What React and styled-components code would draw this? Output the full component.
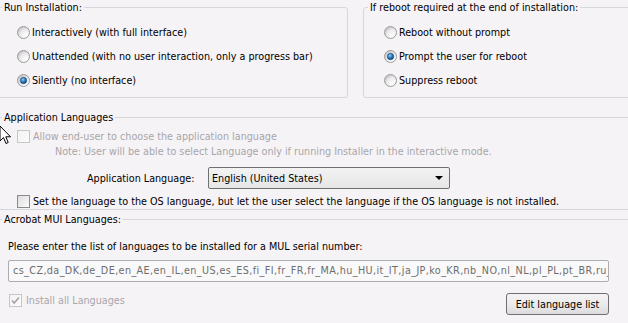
import React from 'react';
import styled, { createGlobalStyle } from 'styled-components';

const GlobalStyle = createGlobalStyle`
  html, body {
    margin: 0;
    padding: 0;
    background: #f6f3f6;
  }
`;

const Page = styled.div`
  position: relative;
  width: 628px;
  height: 323px;
  overflow: hidden;
  box-sizing: border-box;
  padding-top: 1px;
  background: #f6f3f6;
  font-family: "DejaVu Sans Condensed", "DejaVu Sans", sans-serif;
  font-stretch: condensed;
  font-size: 10.7px;
  color: #000;
`;

const TopRow = styled.div`
  display: flex;
  gap: 15px;
  margin-left: -2px;
`;

const Group = styled.fieldset`
  flex: none;
  box-sizing: border-box;
  width: ${(p) => p.$width}px;
  min-width: 0;
  margin: ${(p) => p.$margin || '0'};
  padding: ${(p) => p.$pad || '0'};
  border: 1px solid #d4d8dc;
  border-radius: 3px;
`;

const Legend = styled.legend`
  margin-left: ${(p) => p.$offset}px;
  padding: 0 2px;
  line-height: 13px;
`;

const RadioList = styled.div`
  display: flex;
  flex-direction: column;
  gap: 8px;
  padding: 10px 0 9px ${(p) => p.$indent}px;
`;

const Choice = styled.label`
  display: flex;
  align-items: center;
  gap: ${(p) => p.$gap || 2}px;
  height: ${(p) => p.$h || 16}px;
  color: ${(p) => (p.$disabled ? '#a7a6aa' : '#000')};
  padding-left: ${(p) => p.$indent || 0}px;
  margin-top: ${(p) => p.$top || 0}px;
  white-space: nowrap;
`;

const Note = styled.div`
  margin-top: 2px;
  padding-left: 56px;
  line-height: 13px;
  color: #a7a6aa;
  white-space: nowrap;
`;

const LangRow = styled.div`
  display: flex;
  align-items: center;
  margin-top: 9px;
  padding-left: 88px;
`;

const LangLabel = styled.span`
  width: 121px;
  flex: none;
`;

const Combo = styled.div`
  box-sizing: border-box;
  display: flex;
  align-items: center;
  justify-content: space-between;
  width: 242px;
  height: 22px;
  padding: 0 6px 0 3px;
  border: 1px solid #707070;
  border-radius: 2px;
  background: linear-gradient(#f3f3f3, #e6e6e6);
`;

const Arrow = styled.span`
  width: 0;
  height: 0;
  border-left: 4px solid transparent;
  border-right: 4px solid transparent;
  border-top: 4px solid #000;
`;

const MuiBody = styled.div`
  width: 601px;
  padding: 14px 0 20px 9px;
`;

const Prompt = styled.div`
  line-height: 13px;
  white-space: nowrap;
`;

const ListField = styled.div`
  box-sizing: border-box;
  width: 601px;
  height: 22px;
  margin-top: 7px;
  padding: 0 4px;
  border: 1px solid #abadb3;
  border-radius: 2px;
  background: #faf9fa;
  color: #6d6d6d;
  line-height: 20px;
  letter-spacing: 0.4px;
  white-space: nowrap;
  overflow: hidden;
`;

const BottomRow = styled.div`
  display: flex;
  justify-content: space-between;
  align-items: flex-start;
  margin-top: 11px;
`;

const Button = styled.button`
  box-sizing: border-box;
  width: 103px;
  height: 22px;
  padding: 0;
  border: 1px solid #707070;
  border-radius: 3px;
  background: linear-gradient(#f4f4f4 0%, #ebebeb 50%, #dcdcdc 100%);
  font: inherit;
  color: #000;
`;

const Cursor = styled.svg`
  position: absolute;
  left: -1px;
  top: 125px;
`;

function RadioMark({ checked }) {
  return (
    <svg width="13" height="13" viewBox="0 0 13 13">
      <defs>
        <radialGradient id="rFill" cx="0.7" cy="0.75" r="0.8">
          <stop offset="0" stopColor="#ffffff" />
          <stop offset="0.6" stopColor="#ebebeb" />
          <stop offset="1" stopColor="#c4c4c4" />
        </radialGradient>
        <radialGradient id="rDot" cx="0.4" cy="0.35" r="0.7">
          <stop offset="0" stopColor="#8fd0f5" />
          <stop offset="0.5" stopColor="#2b7dc0" />
          <stop offset="1" stopColor="#0d3f78" />
        </radialGradient>
      </defs>
      <circle cx="6.5" cy="6.5" r="6" fill="url(#rFill)" stroke="#9c9c9c" />
      {checked && <circle cx="6.5" cy="6.5" r="3.2" fill="url(#rDot)" stroke="#17406e" strokeWidth="0.6" />}
    </svg>
  );
}

function CheckMark({ checked, disabled }) {
  const edge = disabled ? '#c6c6c6' : '#8a8a8a';
  return (
    <svg width="13" height="13" viewBox="0 0 13 13">
      <defs>
        <linearGradient id={disabled ? 'cOff' : 'cOn'} x1="0" y1="0" x2="1" y2="1">
          <stop offset="0" stopColor={disabled ? '#f2f2f2' : '#dcdcdc'} />
          <stop offset="1" stopColor="#fcfcfc" />
        </linearGradient>
      </defs>
      <rect x="0.5" y="0.5" width="12" height="12" fill={`url(#${disabled ? 'cOff' : 'cOn'})`} stroke={edge} />
      {checked && (
        <path d="M3 6.5 L5.2 9 L10 3.5" fill="none" stroke="#a3a3a3" strokeWidth="1.6" />
      )}
    </svg>
  );
}

// the field is narrower than the list, so it shows only the start of it
const langList =
  'cs_CZ,da_DK,de_DE,en_AE,en_IL,en_US,es_ES,fi_FI,fr_FR,fr_MA,hu_HU,it_IT,ja_JP,ko_KR,nb_NO,nl_NL,pl_PL,pt_BR,ru_RU,sv_SE,tr_TR,uk_UA,zh_CN,zh_TW';

export default function App() {
  return (
    <>
      <GlobalStyle />
      <Page>
        <TopRow>
          <Group $width={350}>
            <Legend $offset={3}>Run Installation:</Legend>
            <RadioList $indent={18}>
              <Choice><RadioMark />Interactively (with full interface)</Choice>
              <Choice><RadioMark />Unattended (with no user interaction, only a progress bar)</Choice>
              <Choice><RadioMark checked />Silently (no interface)</Choice>
            </RadioList>
          </Group>
          <Group $width={300}>
            <Legend $offset={4}>If reboot required at the end of installation:</Legend>
            <RadioList $indent={20}>
              <Choice><RadioMark />Reboot without prompt</Choice>
              <Choice><RadioMark checked />Prompt the user for reboot</Choice>
              <Choice><RadioMark />Suppress reboot</Choice>
            </RadioList>
          </Group>
        </TopRow>

        <Group $width={660} $margin="13px 0 0 -2px" $pad="0 0 1px 0">
          <Legend $offset={3}>Application Languages</Legend>
          <Choice $disabled $indent={18} $top={6} $gap={3} $h={13}>
            <CheckMark disabled />Allow end-user to choose the application language
          </Choice>
          <Note>Note: User will be able to select Language only if running Installer in the interactive mode.</Note>
          <LangRow>
            <LangLabel>Application Language:</LangLabel>
            <Combo>
              <span>English (United States)</span>
              <Arrow />
            </Combo>
          </LangRow>
          <Choice $indent={18} $top={6} $gap={3} $h={13}>
            <CheckMark />Set the language to the OS language, but let the user select the language if the OS language is not installed.
          </Choice>
        </Group>

        <Group $width={660} $margin="3px 0 0 -2px">
          <Legend $offset={3}>Acrobat MUI Languages:</Legend>
          <MuiBody>
            <Prompt>Please enter the list of languages to be installed for a MUL serial number:</Prompt>
            <ListField>{langList}</ListField>
            <BottomRow>
              <Choice $disabled $indent={1} $top={1} $gap={4} $h={13}>
                <CheckMark checked disabled />Install all Languages
              </Choice>
              <Button>Edit language list</Button>
            </BottomRow>
          </MuiBody>
        </Group>

        <Cursor width="13" height="20" viewBox="0 0 13 20">
          <path d="M1 1 L1 16 L4.5 12.5 L7 18.5 L9.2 17.5 L6.8 11.8 L11.5 11.8 Z" fill="#fff" stroke="#000" strokeWidth="1" strokeLinejoin="round" />
        </Cursor>
      </Page>
    </>
  );
}
